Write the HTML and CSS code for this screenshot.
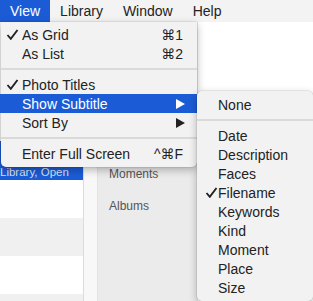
FILE: index.html
```html
<!DOCTYPE html>
<html lang="en">
<head>
    <meta charset="UTF-8">
    <title>Photos - View menu</title>
    <link rel="stylesheet" href="styles.css">
</head>
<body>
<div class="menubar">
    <span class="title active">View</span>
    <span class="title">Library</span>
    <span class="title">Window</span>
    <span class="title">Help</span>
</div>
<div class="screen">
    <ul class="list">
        <li class="row top"></li>
        <li class="row sel"><span>Library, Open</span></li>
        <li class="row"></li>
        <li class="row alt"></li>
        <li class="row"></li>
        <li class="row alt"></li>
    </ul>
    <div class="split"></div>
    <ul class="sidebar">
        <li>Moments</li>
        <li>Albums</li>
    </ul>
    <div class="content"></div>
</div>

<ul class="menu main">
    <li class="item"><svg class="check" viewBox="0 0 12 11"><path d="M1 6 L4.3 9.8 L11 1"/></svg>As Grid<span class="key">⌘1</span></li>
    <li class="item">As List<span class="key">⌘2</span></li>
    <li class="sep"></li>
    <li class="item"><svg class="check" viewBox="0 0 12 11"><path d="M1 6 L4.3 9.8 L11 1"/></svg>Photo Titles</li>
    <li class="item hl">Show Subtitle<span class="arrow"></span></li>
    <li class="item">Sort By<span class="arrow"></span></li>
    <li class="sep"></li>
    <li class="item">Enter Full Screen<span class="key">^⌘F</span></li>
</ul>

<ul class="menu sub">
    <li class="item">None</li>
    <li class="sep"></li>
    <li class="item">Date</li>
    <li class="item">Description</li>
    <li class="item">Faces</li>
    <li class="item"><svg class="check" viewBox="0 0 12 11"><path d="M1 6 L4.3 9.8 L11 1"/></svg>Filename</li>
    <li class="item">Keywords</li>
    <li class="item">Kind</li>
    <li class="item">Moment</li>
    <li class="item">Place</li>
    <li class="item">Size</li>
</ul>
</body>
</html>
```

FILE: styles.css
```css
html, body {
    margin: 0;
    width: 313px;
    height: 301px;
    overflow: hidden;
    background: #fff;
    font-family: "Liberation Sans", Arial, "DejaVu Sans", sans-serif;
    color: #222;
}

ul {
    margin: 0;
    padding: 0;
    list-style: none;
}

.menubar {
    display: flex;
    height: 22px;
    background: #f3f3f3;
    font-size: 14px;
    line-height: 22px;
}

.menubar .title {
    padding: 0 10px;
}

.menubar .active {
    background: #1b5cd6;
    color: #fff;
}

.screen {
    display: flex;
    height: 279px;
    overflow: hidden;
}

.list {
    width: 83px;
    display: flex;
    flex-direction: column;
    overflow: hidden;
}

.list .row {
    flex: none;
    height: 38px;
    background: #fff;
}

.list .top {
    height: 119px;
}

.list .sel {
    height: 39px;
    background: #1b5cd6;
    color: rgba(255, 255, 255, .85);
    font-size: 11.5px;
    display: flex;
    align-items: flex-end;
    padding-bottom: 2px;
    box-sizing: border-box;
    white-space: nowrap;
    overflow: hidden;
}

.list .alt {
    background: #f0f0f0;
}

.split {
    width: 13px;
    border-left: 1px solid #dcdcdc;
    border-right: 1px solid #e2e2e2;
    background: #f8f8f8;
}

.sidebar {
    width: 100px;
    background: #ebebeb;
    padding: 145px 0 0 11px;
    box-sizing: border-box;
    font-size: 12px;
    color: #555;
}

.sidebar li {
    height: 32px;
}

.content {
    flex: 1;
    background: #fff;
}

/* menus */
.menu {
    position: absolute;
    background: #f2f2f2;
    font-size: 14px;
    color: #222;
    box-shadow: 0 3px 9px rgba(0, 0, 0, .28), 0 0 0 .5px rgba(0, 0, 0, .12);
}

.main {
    left: 1px;
    top: 22px;
    width: 196px;
    padding: 3px 0 4px;
    border-radius: 0 0 5px 5px;
}

.sub {
    left: 197px;
    top: 91px;
    width: 116px;
    padding: 4px 0 4px;
    border-radius: 5px;
}

.item {
    position: relative;
    display: flex;
    align-items: center;
    height: 19px;
    padding: 0 14px 0 21px;
    white-space: nowrap;
}

.sub .item {
    padding-left: 21px;
}

.item.hl {
    background: #1b5cd6;
    color: #fff;
    margin-left: -1px;
    padding-left: 22px;
}

.check {
    position: absolute;
    left: 5px;
    top: 4px;
    width: 13px;
    height: 11px;
    fill: none;
    stroke: #222;
    stroke-width: 1.9;
}

.sub .check {
    left: 8px;
}

.key {
    margin-left: auto;
}

.arrow {
    margin-left: auto;
    margin-right: -2px;
    width: 0;
    height: 0;
    border-top: 5px solid transparent;
    border-bottom: 5px solid transparent;
    border-left: 9px solid #222;
}

.hl .arrow {
    border-left-color: #fff;
}

.sep {
    height: 12px;
    display: flex;
    align-items: center;
}

.sep::before {
    content: "";
    flex: 1;
    height: 2px;
    background: #dadada;
}
```
